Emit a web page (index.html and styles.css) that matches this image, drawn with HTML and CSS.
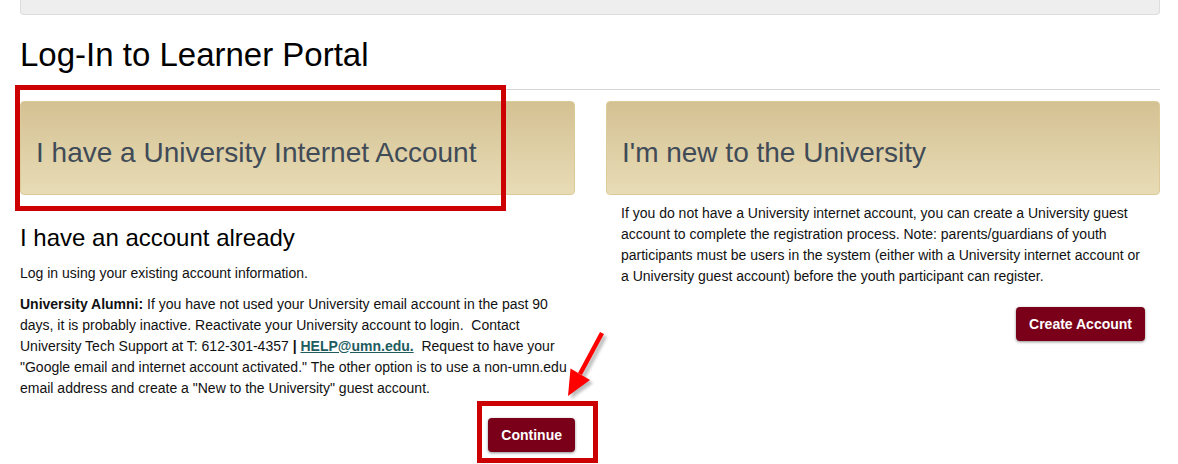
FILE: index.html
```html
<!DOCTYPE html>
<html lang="en">
<head>
<meta charset="utf-8">
<title>Log-In to Learner Portal</title>
<link rel="stylesheet" href="styles.css">
</head>
<body>
<div class="page">
  <div class="topbar"></div>
  <h1 class="page-title">Log-In to Learner Portal</h1>
  <hr class="rule">
  <div class="columns">
    <section class="col col-left">
      <div class="panel"><h2 class="panel-title">I have a University Internet Account</h2></div>
      <h3 class="sub">I have an account already</h3>
      <p class="lead-text">Log in using your existing account information.</p>
      <p class="body-text"><strong>University Alumni:</strong> If you have not used your University email account in the past 90 days, it is probably inactive. Reactivate your University account to login.&nbsp; Contact University Tech Support at T: 612-301-4357 <strong>|</strong> <a class="link" href="#">HELP@umn.edu.</a>&nbsp; Request to have your "Google email and internet account activated." The other option is to use a non-umn.edu email address and create a "New to the University" guest account.</p>
      <div class="actions"><button class="btn">Continue</button></div>
    </section>
    <section class="col col-right">
      <div class="panel"><h2 class="panel-title">I'm new to the University</h2></div>
      <div class="col-body">
        <p class="body-text new-text">If you do not have a University internet account, you can create a University guest account to complete the registration process. Note: parents/guardians of youth participants must be users in the system (either with a University internet account or a University guest account) before the youth participant can register.</p>
        <div class="actions actions-right"><button class="btn">Create Account</button></div>
      </div>
    </section>
  </div>
</div>
<div class="mark mark-panel"></div>
<div class="mark mark-btn"></div>
<svg class="arrow" width="1178" height="464" viewBox="0 0 1178 464" xmlns="http://www.w3.org/2000/svg">
  <defs>
    <filter id="sh" x="-50%" y="-50%" width="200%" height="200%">
      <feGaussianBlur stdDeviation="1.5"/>
    </filter>
  </defs>
  <g fill="#888" stroke="#888" opacity="0.55" filter="url(#sh)" transform="translate(3 3)">
    <line x1="602" y1="333" x2="580" y2="374" stroke-width="4.5"/>
    <polygon points="568,396 570.5,368.5 590,380" stroke="none"/>
  </g>
  <line x1="602" y1="333" x2="580" y2="374" stroke="#ff0000" stroke-width="4.5"/>
  <polygon points="568,396 570.5,368.5 590,380" fill="#ff0000"/>
</svg>
</body>
</html>
```
FILE: styles.css
```css
html, body {
  margin: 0;
  padding: 0;
  background: #fff;
}
body {
  font-family: "Liberation Sans", Arial, sans-serif;
  font-size: 14px;
  line-height: 21px;
  color: #111;
  position: relative;
  width: 1178px;
  height: 464px;
  overflow: hidden;
}
.page {
  width: 1140px;
  margin-left: 20px;
}
.topbar {
  height: 14px;
  background: #eeeeee;
  border: 1px solid #dddddd;
  border-top: 0;
  border-radius: 0 0 4px 4px;
}
.page-title {
  font-size: 33px;
  font-weight: normal;
  line-height: 1.1;
  margin: 22px 0 0;
  color: #000;
}
.rule {
  border: 0;
  border-top: 1px solid #d4d4d4;
  margin: 16px 0 0;
  height: 0;
}
.columns {
  display: grid;
  grid-template-columns: 555px 554px;
  column-gap: 31px;
  margin-top: 11px;
}
.panel {
  height: 94px;
  box-sizing: border-box;
  padding: 36px 15px 0;
  border: 1px solid #dccb98;
  border-radius: 4px;
  background: linear-gradient(to bottom, #d4c193 0%, #e8dcb6 100%);
}
.panel-title {
  margin: 0;
  font-size: 28px;
  font-weight: normal;
  line-height: 1.1;
  color: #404b57;
}
.sub {
  font-size: 24px;
  font-weight: normal;
  line-height: 1.1;
  margin: 30px 0 0;
  color: #000;
}
.lead-text {
  margin: 11px 0 0;
}
.body-text {
  margin: 10px 0 0;
}
.link {
  color: #1e5b5e;
  font-weight: bold;
  text-decoration: underline;
}
.actions {
  display: flex;
  justify-content: flex-end;
  margin-top: 19px;
}
.col-body {
  padding: 0 15px;
}
.new-text {
  margin-top: 8px;
}
.actions-right {
  margin-top: 20px;
}
.btn {
  height: 34px;
  padding: 0 13px;
  border: 0;
  border-radius: 4px;
  background: #7a0019;
  color: #fff;
  font-family: "Liberation Sans", Arial, sans-serif;
  font-size: 14px;
  font-weight: bold;
  box-shadow: 0 1px 3px rgba(0, 0, 0, 0.45);
  cursor: pointer;
}
.mark {
  position: absolute;
  border: 5px solid #cc0000;
  box-sizing: border-box;
}
.mark-panel {
  left: 15px;
  top: 85px;
  width: 491px;
  height: 126px;
}
.mark-btn {
  left: 477px;
  top: 401px;
  width: 121px;
  height: 62px;
}
.arrow {
  position: absolute;
  left: 0;
  top: 0;
  pointer-events: none;
}
```
